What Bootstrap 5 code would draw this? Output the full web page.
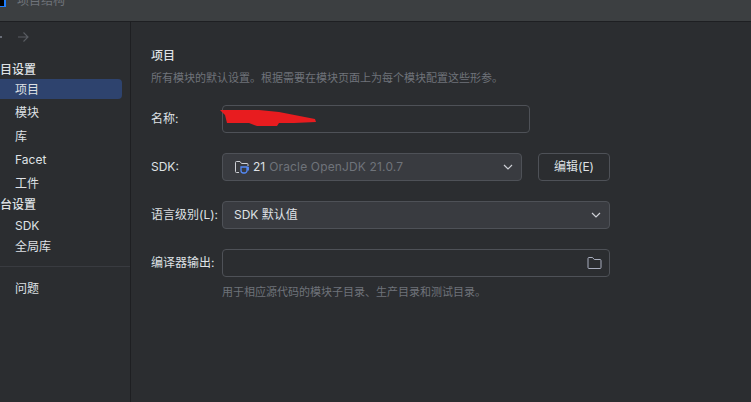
<!DOCTYPE html>
<html lang="zh-CN">
<head>
  <meta charset="UTF-8">
  <meta name="viewport" content="width=device-width, initial-scale=1.0">
  <title>项目结构</title>
  <link href="https://cdn.jsdelivr.net/npm/bootstrap@5.3.3/dist/css/bootstrap.min.css" rel="stylesheet">
  <style>
    html, body {
      height: 100%;
      overflow: hidden;
    }
    body {
      background-color: #2b2d30;
      color: #dfe1e5;
      font-family: Inter, "Noto Sans CJK SC", sans-serif;
      font-size: 12px;
      line-height: 18px;
    }
    .title-bar {
      height: 22px;
      overflow: hidden;
      background-color: #3c3f41;
      border-bottom: 1px solid #1e1f22;
      color: #6f737a;
    }
    .app-logo {
      width: 6px;
      height: 7px;
      background-color: #000;
      border: 2px solid #1f7fff;
      border-width: 0 2px 1px 0;
    }
    .title-text {
      margin-top: -8px;
      margin-left: 11px;
    }
    .side-col {
      width: 131px;
      height: 380px;
      flex-shrink: 0;
      border-right: 1px solid #1e1f22;
    }
    .hist-row {
      height: 28px;
      margin-top: 1px;
      padding-left: 17px;
    }
    .back-arrow {
      position: absolute;
      left: -9px;
    }
    .side-group {
      height: 20px;
      line-height: 20px;
      padding-top: 1px;
      font-weight: 500;
      white-space: nowrap;
      margin-left: -12px;
    }
    .group-a { margin-top: 8px; }
    .side-item {
      height: 23.6px;
      line-height: 23.6px;
      padding: 1px 0 0 15px;
    }
    .side-item.compact-item {
      height: 21px;
      line-height: 21px;
    }
    .side-item.active-item {
      height: 20px;
      line-height: 20px;
      margin-right: 8px;
      margin-bottom: 1px;
      background-color: #2e436e;
      border-radius: 0 4px 4px 0;
    }
    .side-rule {
      height: 1px;
      margin: 10px 0;
      background-color: #393b40;
    }
    .main-col {
      padding: 25px 0 0 20px;
      width: 480px;
    }
    .page-head { font-weight: 500; }
    .page-sub, .help-text {
      color: #6f737a;
      font-size: 11px;
      white-space: nowrap;
    }
    .page-sub { margin-top: 4px; margin-bottom: 18px; }
    .help-text { margin-left: 71px; margin-top: 6px; }
    .form-line {
      height: 28px;
      margin-bottom: 20px;
    }
    .form-line.last-line { margin-bottom: 0; }
    .field-label {
      width: 71px;
      flex-shrink: 0;
      white-space: nowrap;
    }
    .form-control.ide-input, .ide-select, .ide-btn {
      height: 28px;
      padding: 0 11px;
      font-size: 12px;
      line-height: 18px;
      color: #dfe1e5;
      border: 1px solid #4e5157;
      border-radius: 4px;
      box-shadow: none;
    }
    .form-control.ide-input { background-color: #2b2d30; }
    .ide-select { background-color: #393b40; }
    .ide-btn {
      width: 72px;
      margin-left: 16px;
      padding: 0;
      background-color: #2b2d30;
    }
    .ide-btn:hover, .ide-select:hover {
      color: #dfe1e5;
      border-color: #4e5157;
    }
    .name-wrap { width: 308px; }
    .sdk-select { width: 300px; }
    .wide-field { width: 388px; }
    .sdk-name { color: #6f737a; margin-left: 4px; letter-spacing: .15px; }
    .sdk-icon { margin-right: 3px; }
    .chevron-mark { margin-right: -3px; }
    .scribble {
      position: absolute;
      left: -3px;
      top: 3px;
    }
    .folder-btn {
      position: absolute;
      right: 8px;
      top: 7px;
    }
  </style>
</head>
<body>
  <!-- Title bar, cropped at the top -->
  <div class="title-bar d-flex align-items-start">
    <div class="app-logo"></div>
    <div class="title-text">项目结构</div>
  </div>

  <div class="d-flex">
    <!-- Sidebar -->
    <nav class="side-col overflow-hidden">
      <div class="hist-row position-relative d-flex align-items-center">
        <svg class="back-arrow" width="12" height="12" viewBox="0 0 12 12" fill="none" stroke="#a8adbd" stroke-width="1.1"><path d="M1 6h10M5.500 1.500 1 6l4.500 4.500"/></svg>
        <svg width="12" height="12" viewBox="0 0 12 12" fill="none" stroke="#5a5d63" stroke-width="1.1"><path d="M1 6h10M6.500 1.500 11 6l-4.500 4.500"/></svg>
      </div>
      <div class="side-group group-a">项目设置</div>
      <div class="side-item active-item">项目</div>
      <div class="side-item">模块</div>
      <div class="side-item">库</div>
      <div class="side-item">Facet</div>
      <div class="side-item">工件</div>
      <div class="side-group">平台设置</div>
      <div class="side-item compact-item">SDK</div>
      <div class="side-item compact-item">全局库</div>
      <div class="side-rule"></div>
      <div class="side-item compact-item">问题</div>
    </nav>

    <!-- Main content -->
    <main class="main-col">
      <div class="page-head">项目</div>
      <div class="page-sub">所有模块的默认设置。根据需要在模块页面上为每个模块配置这些形参。</div>

      <div class="form-line d-flex align-items-center">
        <label class="field-label">名称:</label>
        <div class="name-wrap position-relative">
          <input class="form-control ide-input" type="text">
          <svg class="scribble" width="98" height="20" viewBox="0 0 98 20"><path d="M1 2 40 2 60 4 96 11 97 14 75 15 60 15 58 18 38 18 30 15 8 15 6 7Z" fill="#e81c1f"/></svg>
        </div>
      </div>

      <div class="form-line d-flex align-items-center">
        <label class="field-label">SDK:</label>
        <button class="btn ide-select sdk-select d-flex align-items-center" type="button">
          <svg class="sdk-icon flex-shrink-0" width="16" height="16" viewBox="0 0 16 16" fill="none"><path d="M5 13.500H2.500a1 1 0 0 1-1-1v-9a1 1 0 0 1 1-1h3.500l1.500 2h5.500a1 1 0 0 1 1 1v1.500" stroke="#ced0d6"/><path d="M7 8h6v3.500a2.500 2.500 0 0 1-2.500 2.500h-1A2.500 2.500 0 0 1 7 11.500zM13 8.500h1.300v2.300H13" stroke="#548af7" stroke-width="1.300"/></svg>
          <span>21</span><span class="sdk-name">Oracle OpenJDK 21.0.7</span>
          <svg class="chevron-mark ms-auto" width="10" height="6" viewBox="0 0 10 6" fill="none" stroke="#ced0d6" stroke-width="1.200"><path d="M1 1l4 4 4-4"/></svg>
        </button>
        <button class="btn ide-btn" type="button">编辑(E)</button>
      </div>

      <div class="form-line d-flex align-items-center">
        <label class="field-label">语言级别(L):</label>
        <button class="btn ide-select wide-field d-flex align-items-center" type="button">
          <span>SDK 默认值</span>
          <svg class="chevron-mark ms-auto" width="10" height="6" viewBox="0 0 10 6" fill="none" stroke="#ced0d6" stroke-width="1.200"><path d="M1 1l4 4 4-4"/></svg>
        </button>
      </div>

      <div class="form-line last-line d-flex align-items-center">
        <label class="field-label">编译器输出:</label>
        <div class="wide-field position-relative">
          <input class="form-control ide-input" type="text">
          <svg class="folder-btn" width="15" height="14" viewBox="0 0 15 14" fill="none" stroke="#a8adbd"><path d="M1 11.500v-9a1 1 0 0 1 1-1h3.500l1.800 2h5.700a1 1 0 0 1 1 1v7a1 1 0 0 1-1 1H2a1 1 0 0 1-1-1z"/></svg>
        </div>
      </div>
      <div class="help-text">用于相应源代码的模块子目录、生产目录和测试目录。</div>
    </main>
  </div>

  <script src="https://cdn.jsdelivr.net/npm/bootstrap@5.3.3/dist/js/bootstrap.bundle.min.js"></script>
</body>
</html>
